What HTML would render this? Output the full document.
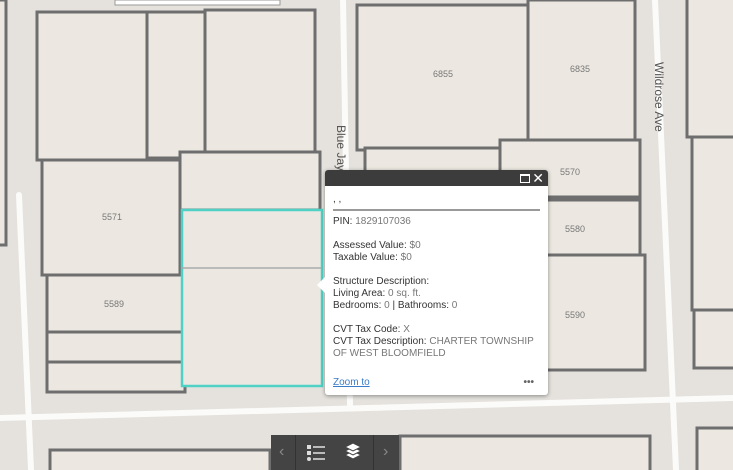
<!DOCTYPE html>
<html><head><style>
body{margin:0;width:733px;height:470px;overflow:hidden;background:#e5e2dd;font-family:"Liberation Sans",sans-serif;position:relative}
svg{position:absolute;left:0;top:0}
.pop{position:absolute;left:325px;top:170px;width:223px;height:225px;background:#fff;border-radius:3px;box-shadow:0 1px 4px rgba(0,0,0,.4);font-size:10px;color:#333;line-height:12px}
.hd{height:16px;background:#3c3c3c;border-radius:3px 3px 0 0;position:relative}
.bd{padding:0 8px}
.v{color:#777}
.tb{position:absolute;left:271px;top:435px;width:128px;height:35px;background:#444}
</style></head><body>
<svg width="733" height="470" viewBox="0 0 733 470">
<rect width="733" height="470" fill="#e5e2dd"/>
<g stroke="#fbfbfa" stroke-width="6" fill="none" stroke-linecap="round">
<path d="M19 195 L31 470"/><path d="M0 418 L733 398"/><path d="M343 0 L350 405"/><path d="M655 0 L676 470"/>
</g>
<g fill="#ece8e1" stroke="#6e6e6e" stroke-width="3">
<rect x="37" y="12" width="110" height="148"/><rect x="147" y="12" width="58" height="146"/><rect x="205" y="10" width="110" height="142"/>
<rect x="42" y="160" width="138" height="115"/><rect x="180" y="152" width="140" height="58"/>
<rect x="47" y="275" width="138" height="57"/><rect x="47" y="332" width="138" height="30"/><rect x="47" y="362" width="138" height="30"/>
<rect x="357" y="5" width="171" height="145"/><rect x="528" y="0" width="107" height="140"/>
<rect x="365" y="148" width="137" height="50"/><rect x="500" y="140" width="140" height="57"/>
<rect x="545" y="200" width="95" height="55"/><rect x="545" y="255" width="100" height="115"/>
<rect x="687" y="-5" width="60" height="142"/><rect x="692" y="137" width="50" height="173"/><rect x="694" y="310" width="50" height="58"/>
<rect x="50" y="450" width="220" height="40"/><rect x="400" y="436" width="250" height="50"/><rect x="697" y="428" width="50" height="50"/>
<rect x="-10" y="0" width="16" height="245"/>
</g>
<rect x="182" y="210" width="140" height="176" fill="#ece8e1" stroke="#4fd1c5" stroke-width="2.5"/>
<line x1="182" y1="268" x2="322" y2="268" stroke="#aaa" stroke-width="1.5"/>
<rect x="115" y="0" width="165" height="5" fill="#fff" stroke="#999"/>
<g font-size="9" fill="#777" font-family="Liberation Sans"><text x="102" y="220">5571</text><text x="104" y="307">5589</text><text x="433" y="77">6855</text><text x="570" y="72">6835</text><text x="560" y="175">5570</text><text x="565" y="232">5580</text><text x="565" y="318">5590</text></g>
<text x="655" y="62" font-size="12" fill="#555" transform="rotate(90 655 62)">Wildrose Ave</text>
<text x="337" y="125" font-size="12" fill="#555" transform="rotate(90 337 125)">Blue Jay</text>
</svg>
<div class="pop">
<div class="hd"><span style="position:absolute;right:18px;top:4px;width:8px;height:6px;border:1px solid #fff;border-top-width:2px"></span><span style="position:absolute;right:4px;top:0;color:#fff;font-size:14px;line-height:16px">✕</span></div>
<div class="bd">
<div style="height:25px;border-bottom:2px solid #999;line-height:20px;padding-top:4px;box-sizing:border-box">, ,</div>
<div style="margin-top:5px">PIN: <span class="v">1829107036</span></div>
<div style="margin-top:12px">Assessed Value: <span class="v">$0</span><br>Taxable Value: <span class="v">$0</span></div>
<div style="margin-top:12px">Structure Description:<br>Living Area: <span class="v">0 sq. ft.</span><br>Bedrooms: <span class="v">0</span> | Bathrooms: <span class="v">0</span></div>
<div style="margin-top:12px">CVT Tax Code: <span class="v">X</span><br>CVT Tax Description: <span class="v">CHARTER TOWNSHIP<br>OF WEST BLOOMFIELD</span></div>
<div style="margin-top:17px;position:relative"><span style="color:#3a7bc8;text-decoration:underline">Zoom to</span><span style="position:absolute;right:6px;color:#666;font-weight:bold">•••</span></div>
</div></div>
<div style="position:absolute;left:317px;top:277px;width:0;height:0;border:8px solid transparent;border-right-color:#fff;border-left:0"></div>
<div class="tb">
<span style="position:absolute;left:8px;top:8px;color:#888;font-size:16px">‹</span>
<div style="position:absolute;left:24px;top:0;height:35px;border-left:1px solid #333"></div>
<div style="position:absolute;left:36px;top:10px;width:20px;font-size:0">
<div style="display:flex;align-items:center;margin-bottom:2px"><span style="width:4px;height:4px;background:#ddd;margin-right:2px"></span><span style="width:12px;height:2px;background:#bbb"></span></div>
<div style="display:flex;align-items:center;margin-bottom:2px"><span style="width:4px;height:4px;background:#ddd;margin-right:2px"></span><span style="width:12px;height:2px;background:#bbb"></span></div>
<div style="display:flex;align-items:center"><span style="width:4px;height:4px;background:#ddd;border-radius:2px;margin-right:2px"></span><span style="width:12px;height:2px;background:#bbb"></span></div>
</div>
<svg style="left:72px;top:7px" width="20" height="20" viewBox="0 0 20 20"><g fill="#fff" stroke="#444" stroke-width="1"><path d="M10 9l8 4-8 4-8-4z"/><path d="M10 5l8 4-8 4-8-4z"/><path d="M10 1l8 4-8 4-8-4z"/></g></svg>
<div style="position:absolute;left:102px;top:0;height:35px;border-left:1px solid #333"></div>
<span style="position:absolute;left:112px;top:8px;color:#888;font-size:16px">›</span>
</div>
</body></html>
